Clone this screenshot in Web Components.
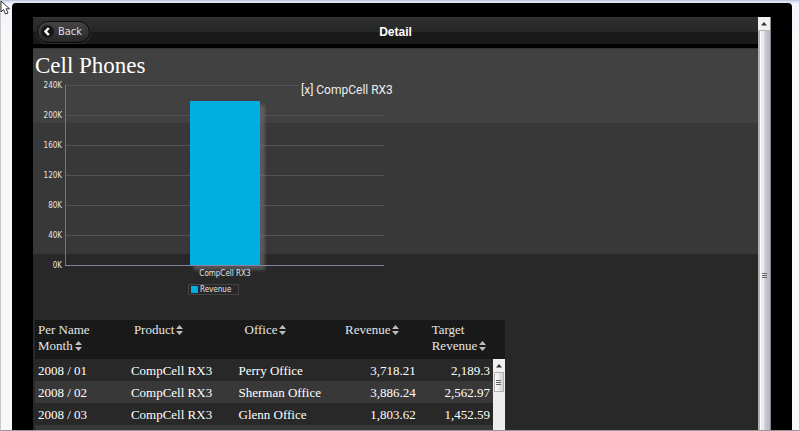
<!DOCTYPE html>
<html lang="en">
<head>
<meta charset="utf-8">
<title>Detail</title>
<style>
body { margin: 0; background: #f8f8f9; font-family: "Liberation Serif", serif; color: #fff; }
</style>
</head>
<body>
<device-frame>
  <detail-header heading="Detail"></detail-header>
  <detail-content>
    <h1 slot="title">Cell Phones</h1>
    <revenue-chart></revenue-chart>
    <sales-table></sales-table>
  </detail-content>
</device-frame>
<script>
function define(name, html, setup) {
  customElements.define(name, class extends HTMLElement {
    constructor() {
      super();
      this.attachShadow({ mode: "open" }).innerHTML = html;
    }
    connectedCallback() { if (setup) setup(this.shadowRoot, this); }
  });
}

define("scroll-bar", `
<style>
:host { display: flex; flex-direction: column; width: 12px; box-sizing: border-box; background: #eeeeef; }
.up { flex: none; height: 13px; background: #f1f1f1; display: grid; place-items: center; }
svg { display: block; }
.thumb { display: grid; place-items: center; border: 1px solid #b5b1b3; border-width: 1px 1px 1px 2px; box-sizing: border-box;
  background: linear-gradient(90deg, #fbfbfb 0 12%, #ebebed 12% 42%, #d0d0d8 42% 65%, #bfc0cc 65%); flex: 1; }
:host([short]) .thumb { flex: none; height: 20px; margin: 0 1px; border-width: 1px;
  background: linear-gradient(90deg, #fff, #d2d2d5); }
</style>
<div class="up"><svg width="6" height="4" viewBox="0 0 6 4"><path d="M3 0L6 3.500H0Z" fill="#333"/></svg></div>
<div class="thumb"><svg width="6" height="7" viewBox="0 0 6 7"><path d="M0 1h5M0 3h5M0 5h5" stroke="#666" transform="translate(0 .5)"/></svg></div>`);

define("device-frame", `
<style>
:host { display: flex; height: 100vh; box-sizing: border-box; padding: 3px 7px 0 11px; border: 1px solid #c9c9c9; border-width: 0 1px 1px 1px; border-bottom-color: #999;
  background: linear-gradient(#c3c9d8 0 1px, #dce2f8 1px 3px, #f3f4fd 3px, #f8f8f8 50px); overflow: hidden; }
.case { flex: 1; display: flex; min-width: 0; padding: 14px 21px 0; background: #000; border-radius: 4px 4px 0 0; overflow: hidden; }
.screen { flex: 1; min-width: 0; display: flex; flex-direction: column; overflow: hidden; }
scroll-bar { border-right: 1px solid #88888f; width: 13px; margin-bottom: -90px; }
.pointer { position: absolute; left: 0; top: 0; }
</style>
<div class="case"><div class="screen"><slot></slot></div><scroll-bar></scroll-bar></div>
<svg class="pointer" width="12" height="17" viewBox="0 0 12 17"><path d="M1 1V12L3.500 9.500L5.500 14L8 13L6 8.800H9.500Z" fill="#fff" stroke="#333"/></svg>`);

define("detail-header", `
<style>
:host { flex: none; display: grid; grid-template-columns: 1fr auto 1fr; align-items: center; height: 27px; padding: 0 4px; margin-bottom: 4px;
  font-family: "Liberation Sans", sans-serif; box-shadow: inset 0 1px #363636;
  background: linear-gradient(#2f2f2f, #272727 15px, #1a1a1a 15px, #191919); }
button { justify-self: start; display: flex; align-items: center; gap: 4px; height: 22px; padding: 0 7px 0 3px; border: 1px solid #090909; border-radius: 11px;
  background: linear-gradient(#454545, #262626); color: #dedede; font: 11px "DejaVu Sans Condensed", "DejaVu Sans", sans-serif; box-shadow: 0 0 0 1px #303030; margin-top: 2px; }
h2 { margin: 0; padding-top: 3px; font-size: 12px; line-height: 14px; }
</style>
<button><svg width="13" height="13" viewBox="0 0 13 13"><circle cx="6.500" cy="6.500" r="6.500" fill="#171717"/><path d="M7.800 3L4.500 6.500L7.800 10" fill="none" stroke="#fff" stroke-width="2.400"/></svg>Back</button>
<h2></h2>`, (root, el) => { root.querySelector("h2").textContent = el.getAttribute("heading"); });

define("detail-content", `
<style>
:host { flex: 1; min-height: 0; display: flex; flex-direction: column; align-items: flex-start; padding: 4px 2px 0; overflow: hidden;
  background: linear-gradient(#343434 0 1px, #414141 1px 75px, #383838 75px 206px, #282828 206px); }
::slotted(h1) { margin: 0; font-size: 23px; line-height: 28px; font-weight: normal; }
</style>
<slot name="title"></slot><slot></slot>`);

define("revenue-chart", `
<style>
:host { display: block; width: 100%; max-width: 370px; flex: none; }
svg { display: block; width: 100%; height: auto; }
text { font-family: "DejaVu Sans Condensed", "DejaVu Sans", sans-serif; font-size: 8px; fill: #e4e4e4; }
.series { font-family: Roboto, sans-serif; font-size: 12px; fill: #eee; }
</style>
<svg viewBox="35 80 370 240" role="img" aria-label="Revenue of CompCell RX3">
  <defs><filter id="s" x="-20%" y="-10%" width="150%" height="120%"><feGaussianBlur stdDeviation="1.500"/></filter></defs>
  <g id="grid"></g>
  <path d="M65.500 85V266" stroke="#74748a"/>
  <rect x="194" y="105" width="71" height="165" fill="#6c6c72" opacity=".65" filter="url(#s)"/>
  <rect x="190" y="101" width="70" height="164" fill="#00aee0"/>
  <path d="M65 265.500H384" stroke="#8484a0"/>
  <text x="225" y="276" text-anchor="middle">CompCell RX3</text>
  <rect x="188.500" y="284.500" width="50" height="10" fill="none" stroke="#444147"/>
  <rect x="191" y="286" width="7" height="7" fill="#00aee0"/>
  <text x="200" y="292">Revenue</text>
  <text class="series" x="301" y="94">[x] CompCell RX3</text>
</svg>`, root => {
  root.querySelector("#grid").innerHTML = [240, 200, 160, 120, 80, 40, 0].map((v, i) =>
    `<path d="M66 ${85.5 + i * 30}H${i ? 384 : 299}" stroke="#525258"/><text x="62" y="${88 + i * 30}" text-anchor="end">${v}K</text>`).join("");
});

define("sales-table", `
<style>
:host { display: flex; width: 100%; max-width: 470px; flex: none; }
table { flex: 1; min-width: 0; table-layout: fixed; border-collapse: collapse; font-size: 13px; line-height: 16px; background: #282828; }
th { height: 39px; padding: 2px 0 5px 3px; box-sizing: border-box; font-weight: normal; text-align: left; vertical-align: top; background: #191919; }
th:nth-child(2) { padding-left: 5px; }
th:nth-child(3) { padding-left: 8px; }
th:nth-child(4) { padding-left: 10px; }
th:nth-child(5) { padding-left: 12px; }
th button { padding: 0; border: 0; background: none; color: #e6e6e6; font: inherit; text-align: left; }
th svg { margin-left: 2px; vertical-align: -1px; }
td { height: 22px; padding: 4px 3px 2px 2px; box-sizing: border-box; white-space: nowrap; }
td:first-child { padding-left: 3px; }
td:nth-child(n+4) { text-align: right; }
td:nth-child(4) { padding-right: 4px; }
tbody tr:nth-child(even) { background: #383838; }
.side { display: flex; flex-direction: column; width: 12px; }
.corner { height: 39px; background: #191919; }
scroll-bar { flex: 1; }
</style>
<table>
  <colgroup><col style="width:20.500%"><col style="width:23.500%"><col style="width:21.500%"><col style="width:18.500%"><col style="width:16%"></colgroup>
  <thead><tr></tr></thead><tbody></tbody>
</table>
<div class="side"><div class="corner"></div><scroll-bar short></scroll-bar></div>`, root => {
  const icon = `<svg width="7" height="10" viewBox="0 0 7 10"><path d="M3.500 0L7 4H0ZM3.500 10L7 6H0Z" fill="#bdbdbd"/></svg>`;
  root.querySelector("thead tr").innerHTML = ["Per Name<br>Month", "Product", "Office", "Revenue", "Target<br>Revenue"]
    .map(t => `<th scope="col"><button>${t}${icon}</button></th>`).join("");
  root.querySelector("tbody").innerHTML = [
    ["2008 / 01", "CompCell RX3", "Perry Office", "3,718.21", "2,189.3"],
    ["2008 / 02", "CompCell RX3", "Sherman Office", "3,886.24", "2,562.97"],
    ["2008 / 03", "CompCell RX3", "Glenn Office", "1,803.62", "1,452.59"],
    ["", "", "", "", ""]
  ].map(r => `<tr>${r.map(c => `<td>${c}</td>`).join("")}</tr>`).join("");
});
</script>
</body>
</html>
